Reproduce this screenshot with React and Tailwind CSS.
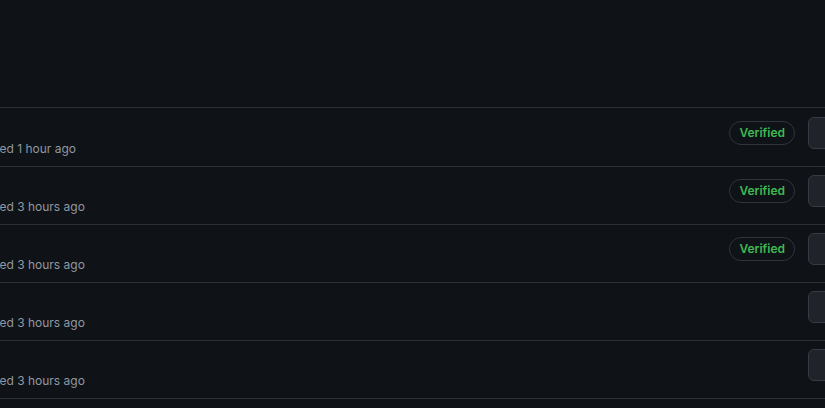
import React from 'react';

const commits = [
    { id: 1, time: '1 hour ago', verified: true, first: true },
    { id: 2, time: '3 hours ago', verified: true },
    { id: 3, time: '3 hours ago', verified: true },
    { id: 4, time: '3 hours ago', verified: false },
    { id: 5, time: '3 hours ago', verified: false },
];

const CommitRow = ({ commit }) => (
    <div
        className={`flex items-start justify-between overflow-hidden border-t border-[#2b3037] ${commit.first ? 'h-[59px] pt-[9px]' : 'h-[58px] pt-2'}`}
    >
        <div className="flex flex-col min-w-0">
            <div className="mt-[23px] -ml-[46px] whitespace-nowrap text-[12px] leading-[18px] text-[#9198a1]">
                committed {commit.time}
            </div>
        </div>
        <div className="flex items-center gap-[13px] -mr-[40px] shrink-0">
            {commit.verified && (
                <span className="flex items-center h-6 px-[9px] rounded-full border border-[#2f353d] text-[12px] font-semibold text-[#3fb950]">
                    Verified
                </span>
            )}
            <button className="w-[57px] h-8 rounded-md bg-[#20242a] border border-[#363b43]" />
        </div>
    </div>
);

export default function App() {
    return (
        <div className="w-[825px] h-[408px] overflow-hidden bg-[#0f1217] font-['Inter',_'Liberation_Sans',_sans-serif]">
            <div className="h-[107px]" />
            <div className="border-b border-[#2b3037]">
                {commits.map(commit => (
                    <CommitRow key={commit.id} commit={commit} />
                ))}
            </div>
        </div>
    );
}
